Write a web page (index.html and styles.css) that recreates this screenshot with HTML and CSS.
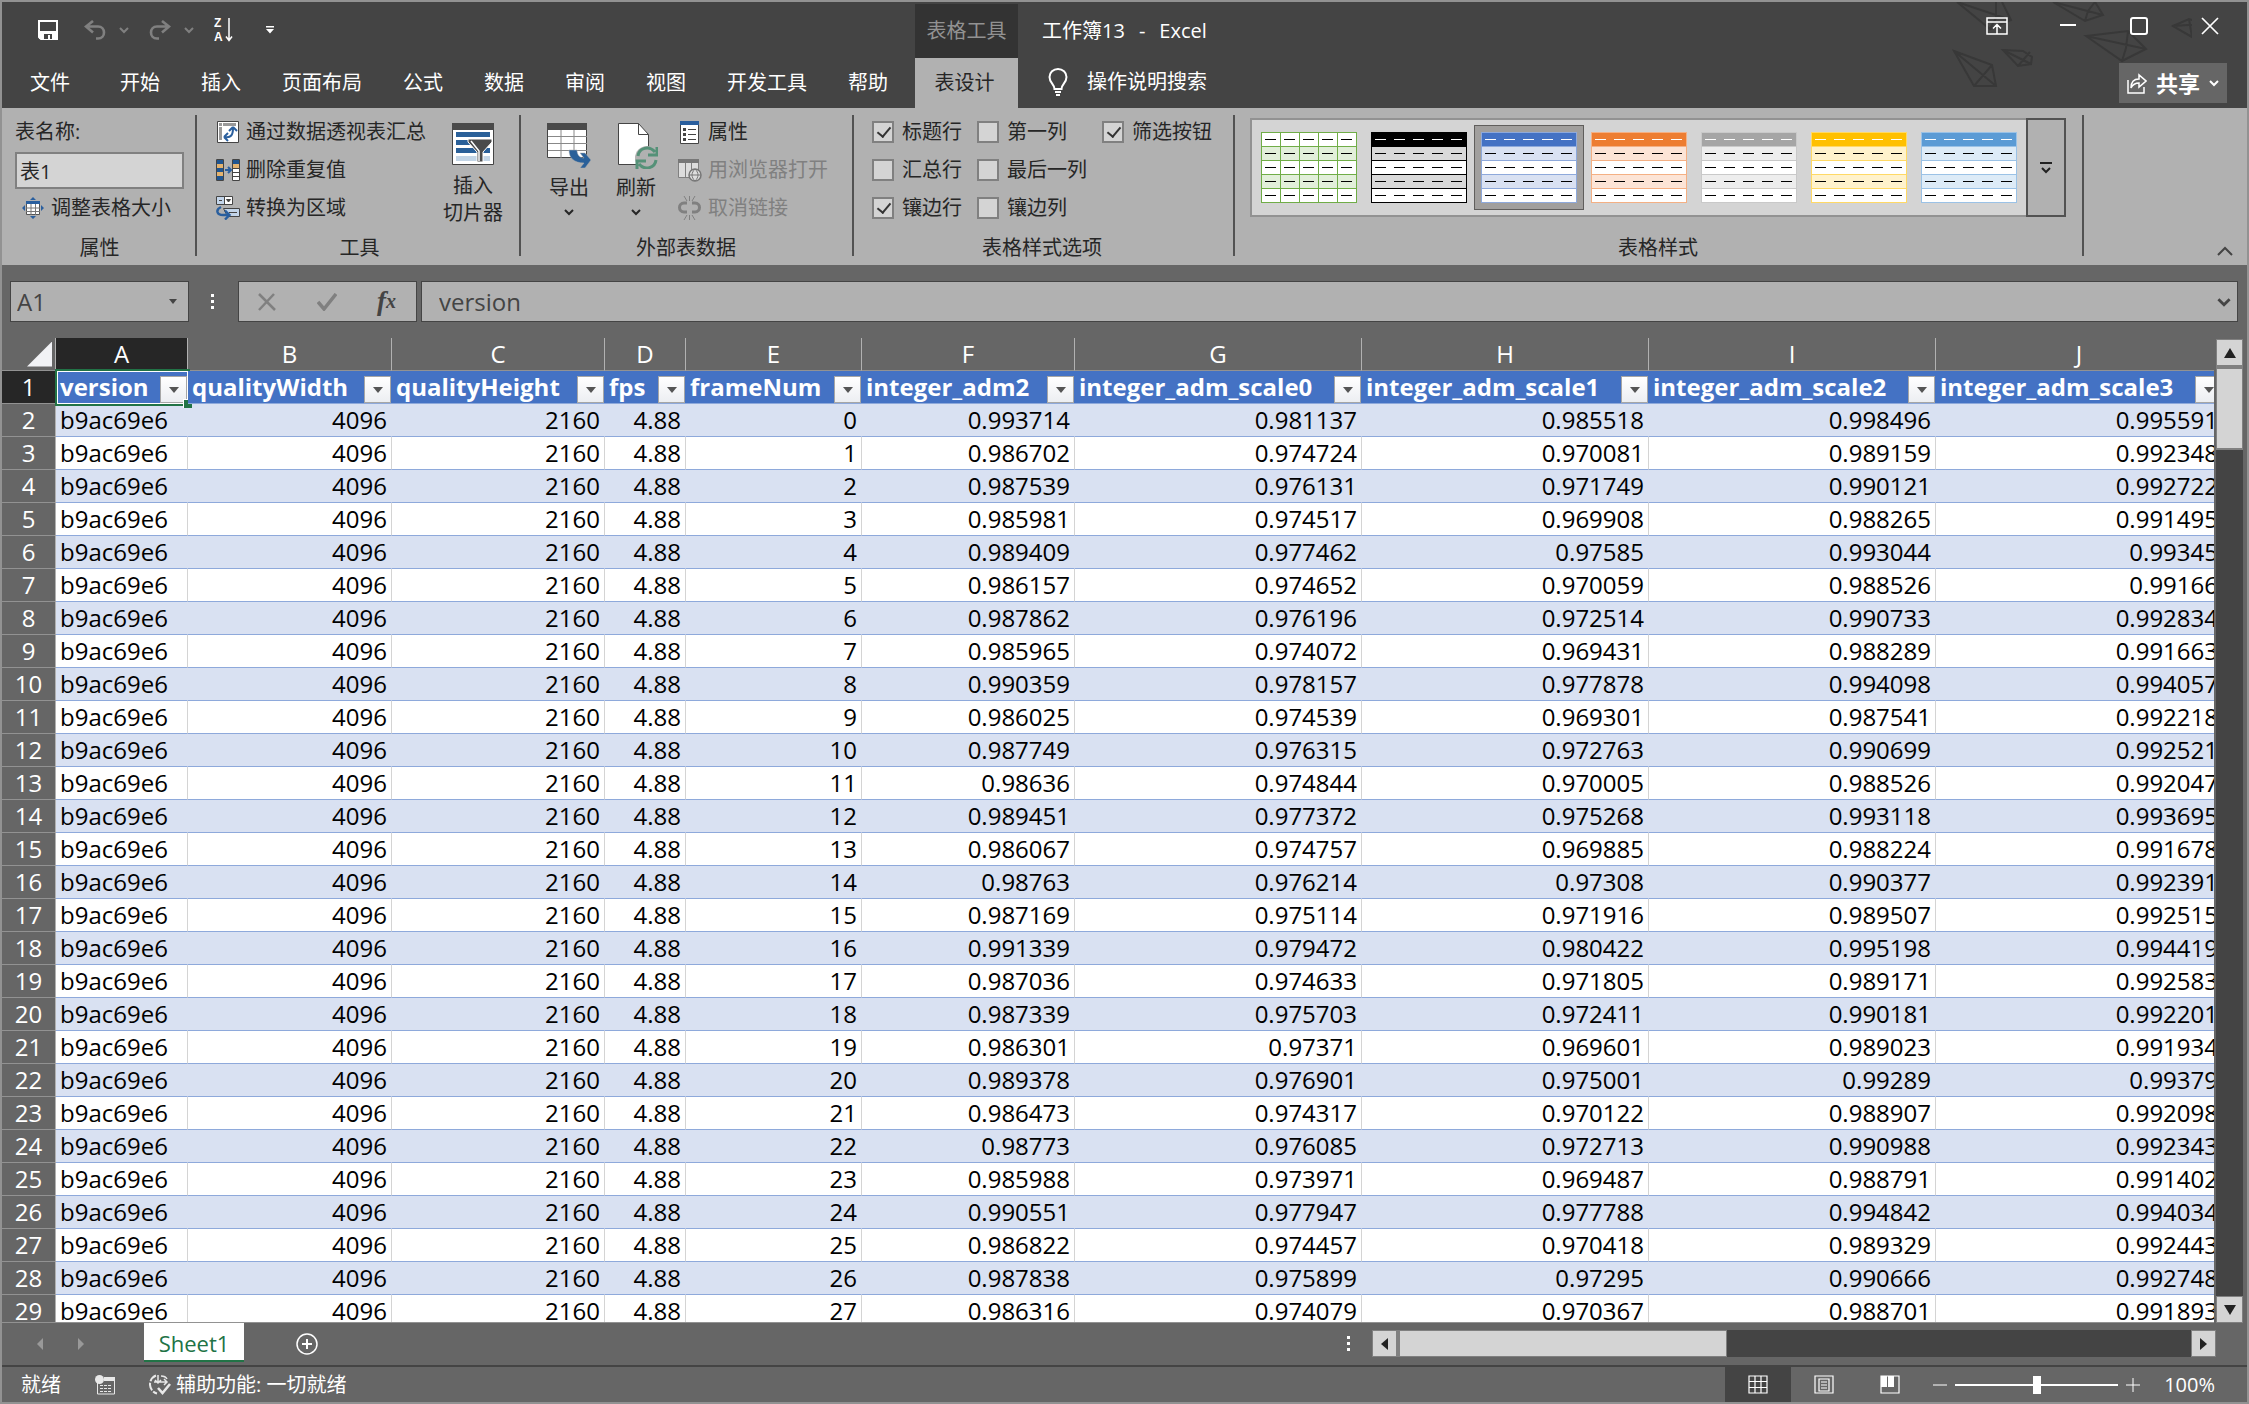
FILE: index.html
```html
<!DOCTYPE html>
<html lang="zh-CN">
  <head>
    <title>工作簿13 - Excel</title>
    <meta charset="utf-8">
    <link rel="stylesheet" href="styles.css">
  </head>
  <body>

  <!-- shared icons -->
  <svg class="defs" width="0" height="0" aria-hidden="true">
    <symbol id="chev" viewBox="0 0 10 10"><path d="M1 3l4 4 4-4" fill="none" stroke="currentColor" stroke-width="2"/></symbol>
    <symbol id="undo" viewBox="0 0 22 20"><path d="M9 1L2 6.500l7 6M3 6.500h11c8 0 8 12 0 12h-2" fill="none" stroke="currentColor" stroke-width="2.600"/></symbol>
    <symbol id="style" viewBox="0 0 96 71">
      <rect width="96" height="71" fill="#fff"/>
      <rect class="s-head" width="96" height="15"/>
      <rect class="s-band" y="14" width="96" height="14"/>
      <rect class="s-band" y="42" width="96" height="14"/>
      <path class="s-line" d="M0 .5h96M0 14.500h96M0 28.500h96M0 42.500h96M0 56.500h96M0 70.500h96M.5 0v71M95.500 0v71"/>
      <path class="s-cols" d="M19.500 0v71M38.500 0v71M57.500 0v71M76.500 0v71"/>
      <path class="s-title" d="M4 7.500h11M23 7.500h11M42 7.500h11M61 7.500h11M80 7.500h11"/>
      <path stroke="#000" d="M4 21.500h11M23 21.500h11M42 21.500h11M61 21.500h11M80 21.500h11M4 35.500h11M23 35.500h11M42 35.500h11M61 35.500h11M80 35.500h11M4 49.500h11M23 49.500h11M42 49.500h11M61 49.500h11M80 49.500h11M4 63.500h11M23 63.500h11M42 63.500h11M61 63.500h11M80 63.500h11"/>
    </symbol>
  </svg>

  <header class="top">
    <svg class="planes" width="240" height="86" viewBox="0 0 240 86" fill="none" stroke="#383838" stroke-width="2">
      <path d="M5 0l33 27 21-9L50 0M5 0l54 18M44 0v16l-6 11M101 0l32 19 18-6-8-13M101 0l50 13M133 19l3-10 7-9M134 34l42-5 18 18-24 12zM134 34l60 13M176 29l-2 17-4 13M221 24l16-7 15 5-12 13zM221 24l31-2M237 17l3 18M2 49l38 14 4 21H22zM2 49l42 35M40 63L22 84M51 48l20 1 9 6-1 7-13 2zM51 48l28 14M78 50L66 64"/>
    </svg>

    <div class="top-main">
      <div class="qat">
        <button class="save" aria-label="保存"><svg width="20" height="20" viewBox="0 0 20 20"><path d="M1 1h18v18H3l-2-2z" fill="none" stroke="#fff" stroke-width="2"/><path d="M1 11h18v8H1z" fill="#fff"/><path d="M6 14h8v5h-2v-4h-2v4H6z" fill="#444"/></svg></button>
        <span class="pair">
          <button aria-label="撤消"><svg width="22" height="20"><use href="#undo"/></svg></button>
          <button aria-label="撤消列表"><svg width="10" height="10"><use href="#chev"/></svg></button>
        </span>
        <span class="pair">
          <button aria-label="恢复"><svg class="flip" width="22" height="20"><use href="#undo"/></svg></button>
          <button aria-label="恢复列表"><svg width="10" height="10"><use href="#chev"/></svg></button>
        </span>
        <button aria-label="降序"><svg width="20" height="30" viewBox="0 0 20 30"><text class="sort" x="0" y="12">Z</text><text class="sort" x="0" y="26">A</text><path d="M15 3v22M12 21.500l3 4 3-4" fill="none" stroke="#fff" stroke-width="1.500"/></svg></button>
        <button class="custom" aria-label="自定义快速访问工具栏"><svg width="8" height="8" viewBox="0 0 8 8"><path d="M0 0h8v1.500H0zM0 3h8L4 7.500z" fill="#fff"/></svg></button>
      </div>
      <nav class="tabs">
        <a class="file" href="#">文件</a>
        <a href="#">开始</a>
        <a href="#">插入</a>
        <a href="#">页面布局</a>
        <a href="#">公式</a>
        <a href="#">数据</a>
        <a href="#">审阅</a>
        <a href="#">视图</a>
        <a href="#">开发工具</a>
        <a href="#">帮助</a>
      </nav>
    </div>

    <div class="context">
      <div class="context-title">表格工具</div>
      <a class="context-tab" href="#">表设计</a>
    </div>

    <div class="top-side">
      <div class="title-row">
        <div class="title"><span>工作簿13</span><span>-</span><span>Excel</span></div>
        <div class="win">
          <button aria-label="功能区显示选项"><svg width="22" height="18" viewBox="0 0 22 18" fill="none" stroke="#fff" stroke-width="1.500"><path d="M1 1h20v16H1zM1 5h20M11 17V8M7 11.500L11 7.500l4 4"/></svg></button>
          <button aria-label="最小化"><svg width="18" height="18" viewBox="0 0 18 18"><path d="M1 8h16" stroke="#fff" stroke-width="2"/></svg></button>
          <button aria-label="最大化"><svg width="18" height="18" viewBox="0 0 18 18"><rect x="1" y="1" width="16" height="16" rx="2" fill="none" stroke="#fff" stroke-width="2"/></svg></button>
          <button aria-label="关闭"><svg width="18" height="18" viewBox="0 0 18 18"><path d="M1 1l16 16M17 1L1 17" stroke="#fff" stroke-width="1.700"/></svg></button>
        </div>
      </div>
      <div class="search-row">
        <button class="tell"><svg width="20" height="28" viewBox="0 0 20 28" fill="none" stroke="#fff" stroke-width="2"><path d="M6.500 21c0-5-5-6-5-12a8.500 8 0 0 1 17 0c0 6-5 7-5 12zM7 24h6M8 27h4"/></svg>操作说明搜索</button>
        <button class="share"><svg width="20" height="21" viewBox="0 0 20 21" fill="none" stroke="#fff" stroke-width="1.500"><path d="M1 7v13h16v-6M4 15c0-6 3-9 8-9V2l7 6-7 6v-4c-4 0-6 1-8 5z"/></svg>共享<svg width="10" height="10"><use href="#chev"/></svg></button>
      </div>
    </div>
  </header>

  <section class="ribbon">
    <div class="group g-props">
      <div class="rows">
        <label for="tname">表名称:</label>
        <input id="tname" type="text" value="表1">
        <button class="cmd resize"><svg width="22" height="22" viewBox="0 0 22 22"><path fill="#fff" stroke="#555" d="M4.500 4.500h13v13h-13z"/><path d="M4 4h14v3H4z" fill="#2a5f9e"/><path stroke="#777" d="M9 7v11M13.500 7v11M4 11h14M4 14.500h14"/><path fill="#2a5f9e" d="M11 0l3 3H8zM11 22l3-3H8zM0 11l3-3v6zM22 11l-3-3v6z"/></svg>调整表格大小</button>
      </div>
      <div class="caption">属性</div>
    </div>

    <div class="group g-tools">
      <div class="cols">
        <div class="rows">
          <button class="cmd"><svg width="24" height="24" viewBox="0 0 24 24"><path d="M1.500 1.500h21v21h-21z" fill="#fff" stroke="#444"/><path d="M3 3h3v3H3zM7 3h13v3H7zM3 7h3v13H3z" fill="#999"/><path d="M9 17c6 1 8-2 8-9M17 7l-4 4M17 7l4 4M8 17l4-4M8 17l4 4" fill="none" stroke="#2a5f9e" stroke-width="2"/></svg>通过数据透视表汇总</button>
          <button class="cmd"><svg width="24" height="24" viewBox="0 0 24 24"><path d="M.5 1.500h7v21h-7zM16.500 1.500h7v21h-7z" fill="#fff" stroke="#444"/><path d="M1 2h6v4H1zM1 10h6v4H1zM1 18h6v4H1zM17 2h6v4h-6z" fill="#1f5591"/><path d="M1 6h6v4H1zM1 14h6v4H1zM17 6h6v4h-6z" fill="#e3b370"/><path d="M17 10.500h6M17 14.500h6M17 18.500h6" stroke="#444"/><path d="M9 12h5M12 9l3 3-3 3" fill="none" stroke="#2a5f9e" stroke-width="2"/></svg>删除重复值</button>
          <button class="cmd"><svg width="24" height="24" viewBox="0 0 24 24"><path d="M.5.500h16v8H.5z" fill="#fff" stroke="#444"/><path d="M1 1h7v7H1z" fill="#c3d5ea"/><path d="M8.500 1v7M3 4.500h3M10.500 3.500h4l-2 2.500z" stroke="#444" fill="#444"/><path d="M7.500 12.500h16v8h-12z" fill="#c3d5ea" stroke="#444"/><path d="M13 16.500h8" stroke="#444"/><path d="M5 11c-6 3-4 8 2 8h5M9 14.500l4.500 4.500L9 23.500" fill="none" stroke="#2a5f9e" stroke-width="2.400"/></svg>转换为区域</button>
        </div>
        <button class="big slicer"><svg width="42" height="42" viewBox="0 0 42 42"><path d="M.5.500h41v41H.5z" fill="#fff" stroke="#444"/><path d="M0 0h42v7H0z" fill="#4a4a4a"/><path d="M4 9h34v5H4zM4 17h34v5H4zM4 25h34v5H4z" fill="#2a6099"/><path d="M4 33h34v5H4z" fill="#c3d5e6"/><path d="M16 16h24v3l-9 10v10h-6V29l-9-10z" fill="#4a4a4a" stroke="#fff"/><path d="M19 18l8 10v10" fill="none" stroke="#fff" stroke-width="1.500"/></svg><span>插入<br>切片器</span></button>
      </div>
      <div class="caption">工具</div>
    </div>

    <div class="group g-ext">
      <div class="cols">
        <button class="big"><svg width="44" height="46" viewBox="0 0 44 46"><path d="M.5.500h39v34H.5z" fill="#fff" stroke="#444"/><path d="M0 0h40v7H0z" fill="#4a4a4a"/><path d="M14 7v28M27 7v28M1 13.500h39M1 20.500h39M1 27.500h39" stroke="#888"/><path d="M22 27h8c0 5 3 8 7 8l-4-5h5l6 7-6 8h-5l4-5c-10 0-15-5-15-13z" fill="#2a6099" stroke="#b1b1b1" stroke-width=".5"/></svg><span>导出</span><svg class="drop" width="10" height="10"><use href="#chev"/></svg></button>
        <button class="big"><svg width="44" height="46" viewBox="0 0 44 46"><path d="M4.500.500h20l10 11v30h-30z" fill="#fff" stroke="#444"/><path d="M24.500.500v11h10" fill="none" stroke="#444"/><circle cx="33" cy="35" r="12" fill="#b1b1b1"/><path d="M24 33c1-8 11-11 17-4M42 37c-1 8-11 11-17 4M43 24v8h-9M23 46v-8h9" fill="none" stroke="#559178" stroke-width="3"/></svg><span>刷新</span><svg class="drop" width="10" height="10"><use href="#chev"/></svg></button>
        <div class="rows">
          <button class="cmd"><svg width="24" height="24" viewBox="0 0 24 24"><path d="M2.500 1.500h18v22h-18z" fill="#fff" stroke="#444"/><path d="M2 1h19v4H2z" fill="#2a5f9e"/><path d="M5 8h3v3H5zM5 13h3v3H5zM5 18h3v3H5z" fill="#444"/><path d="M10 9.500h8M10 14.500h8M10 19.500h8" stroke="#444"/></svg>属性</button>
          <button class="cmd" disabled><svg width="24" height="24" viewBox="0 0 24 24"><path d="M.5 1.500h20v18H.5z" fill="#ddd" stroke="#808080"/><path d="M0 1h21v4H0z" fill="#777"/><path d="M7.500 5v14M13.500 5v14" stroke="#808080"/><circle cx="17" cy="17" r="6" fill="#ddd" stroke="#777" stroke-width="1.500"/><path d="M11 17h12M17 11c-4 4-4 8 0 12M17 11c4 4 4 8 0 12" fill="none" stroke="#777"/></svg>用浏览器打开</button>
          <button class="cmd" disabled><svg width="24" height="24" viewBox="0 0 24 24" fill="none" stroke="#808080"><path d="M9 7H6c-6 0-6 9 0 9h3M14 7h3c6 0 6 9 0 9h-3" stroke-width="3"/><path d="M6 0l3 5M11.500 0v5M17 0l-3 5M6 24l3-5M11.500 24v-5M17 24l-3-5"/></svg>取消链接</button>
        </div>
      </div>
      <div class="caption">外部表数据</div>
    </div>

    <div class="group g-opts">
      <div class="checks">
        <label><input type="checkbox" checked>标题行</label>
        <label><input type="checkbox">第一列</label>
        <label><input type="checkbox" checked>筛选按钮</label>
        <label><input type="checkbox">汇总行</label>
        <label class="wide"><input type="checkbox">最后一列</label>
        <label><input type="checkbox" checked>镶边行</label>
        <label class="wide"><input type="checkbox">镶边列</label>
      </div>
      <div class="caption">表格样式选项</div>
    </div>

    <div class="group g-styles">
      <div class="gallery">
        <div class="swatches">
          <button class="swatch green" aria-label="浅绿"><svg width="96" height="71"><use href="#style"/></svg></button>
          <button class="swatch black" aria-label="黑色"><svg width="96" height="71"><use href="#style"/></svg></button>
          <button class="swatch blue active" aria-label="蓝色"><svg width="96" height="71"><use href="#style"/></svg></button>
          <button class="swatch orange" aria-label="橙色"><svg width="96" height="71"><use href="#style"/></svg></button>
          <button class="swatch gray" aria-label="灰色"><svg width="96" height="71"><use href="#style"/></svg></button>
          <button class="swatch gold" aria-label="金色"><svg width="96" height="71"><use href="#style"/></svg></button>
          <button class="swatch sky" aria-label="天蓝"><svg width="96" height="71"><use href="#style"/></svg></button>
        </div>
        <button class="more" aria-label="其他"><svg width="12" height="12" viewBox="0 0 12 12" fill="none" stroke="#222" stroke-width="2"><path d="M0 1h12M2 6l4 4 4-4"/></svg></button>
      </div>
      <div class="caption">表格样式</div>
    </div>

    <button class="collapse" aria-label="折叠功能区"><svg width="16" height="10" viewBox="0 0 16 10"><path d="M1 9l7-7 7 7" fill="none" stroke="#444" stroke-width="2"/></svg></button>
  </section>

  <section class="formula">
    <div class="namebox">
      <input type="text" value="A1" aria-label="名称框">
      <button aria-label="名称列表"><svg width="8" height="5" viewBox="0 0 8 5"><path d="M0 0h8L4 5z" fill="#444"/></svg></button>
    </div>
    <svg class="dots" width="3" height="16"><path d="M0 0h3v3H0zM0 6h3v3H0zM0 12h3v3H0z" fill="#fff"/></svg>
    <div class="fx">
      <button aria-label="取消"><svg width="20" height="18" viewBox="0 0 20 18"><path d="M2 1l16 16M17 1L2 17" stroke="#808080" stroke-width="2.500"/></svg></button>
      <button aria-label="输入"><svg width="20" height="18" viewBox="0 0 20 18"><path d="M1 9l6 7L19 1" fill="none" stroke="#808080" stroke-width="3.500"/></svg></button>
      <button class="fx-btn" aria-label="插入函数">f<small>x</small></button>
    </div>
    <div class="entry">
      <input type="text" value="version" aria-label="编辑栏">
      <button aria-label="展开编辑栏"><svg width="14" height="14" viewBox="0 0 10 10"><use href="#chev"/></svg></button>
    </div>
  </section>

  <main class="sheet">
    <div class="grid-view">
      <table class="grid">
        <colgroup>
          <col class="w-num"><col class="w-a"><col class="w-b"><col class="w-c"><col class="w-d"><col class="w-e"><col class="w-c"><col class="w-g"><col class="w-g"><col class="w-g"><col class="w-g">
        </colgroup>
        <thead id="head"></thead>
        <tbody id="rows"></tbody>
      </table>
    </div>
    <div class="vscroll">
      <button aria-label="向上滚动"><svg width="12" height="10" viewBox="0 0 12 10"><path d="M6 0l6 10H0z" fill="#222"/></svg></button>
      <div class="vthumb"></div>
      <div class="track"></div>
      <button aria-label="向下滚动"><svg width="12" height="10" viewBox="0 0 12 10"><path d="M0 0h12L6 10z" fill="#222"/></svg></button>
    </div>
  </main>

  <div class="sheetbar">
    <button class="nav" aria-label="上一个工作表"><svg width="6" height="12"><path d="M6 0v12L0 6z" fill="#999"/></svg></button>
    <button class="nav" aria-label="下一个工作表"><svg width="6" height="12"><path d="M0 0v12l6-6z" fill="#999"/></svg></button>
    <a class="sheet-tab" href="#">Sheet1</a>
    <button class="add" aria-label="新工作表"><svg width="22" height="22" viewBox="0 0 22 22" fill="none" stroke="#fff"><circle cx="11" cy="11" r="10" stroke-width="1.500"/><path d="M11 6v10M6 11h10" stroke-width="2"/></svg></button>
    <svg class="dots push" width="3" height="16"><path d="M0 0h3v3H0zM0 6h3v3H0zM0 12h3v3H0z" fill="#fff"/></svg>
    <div class="hscroll">
      <button aria-label="向左滚动"><svg width="7" height="12"><path d="M7 0v12L0 6z" fill="#222"/></svg></button>
      <div class="hthumb"></div>
      <div class="track"></div>
      <button aria-label="向右滚动"><svg width="7" height="12"><path d="M0 0v12l7-6z" fill="#222"/></svg></button>
    </div>
  </div>

  <footer class="status">
    <span>就绪</span>
    <svg class="macro" width="20" height="20" viewBox="0 0 20 20"><path d="M2.500 8v11h17V3H9" fill="none" stroke="#e8e8e8"/><path d="M9 2h11v4H9z" fill="#e8e8e8"/><circle cx="4.500" cy="4.500" r="4.500" fill="#e8e8e8"/><path d="M5 10.500h12M5 13.500h12M5 16.500h12" stroke="#e8e8e8" stroke-dasharray="3 1"/></svg>
    <button class="access"><svg width="22" height="22" viewBox="0 0 22 22" fill="none" stroke="#e8e8e8"><path d="M7 1.500A9.500 9.500 0 0 0 8 19.500" stroke-width="2" stroke-dasharray="8 1.500"/><path d="M9 1v8M5 8h13M15 5l3 3-3 3M6 6l3 3 3-3M12 2c3 0 5 1 6 3" stroke-width="1.500"/><path d="M9 14l4.500 5L21 10" stroke-width="2.600"/></svg>辅助功能: 一切就绪</button>
    <div class="views">
      <button class="on" aria-label="普通"><svg width="20" height="19" viewBox="0 0 20 19" fill="none" stroke="#fff" stroke-width="1.200"><path d="M1 1h18v17H1zM7 1v17M13 1v17M1 6.500h18M1 12.500h18"/></svg></button>
      <button aria-label="页面布局视图"><svg width="20" height="19" viewBox="0 0 20 19" fill="none" stroke="#fff" stroke-width="1.200"><path d="M1 1h18v17H1zM5 4h10v12H5zM7 7h6M7 10h6M7 13h6"/></svg></button>
      <button aria-label="分页预览"><svg width="20" height="19" viewBox="0 0 20 19"><path d="M1 1h18v17H1z" fill="none" stroke="#fff" stroke-width="1.200"/><path d="M1 1h6v11H1zM8 1h6v11H8z" fill="#fff"/></svg></button>
    </div>
    <button class="zoom-btn" aria-label="缩小"><svg width="14" height="14"><path d="M0 7h14" stroke="#fff"/></svg></button>
    <input class="zoom" type="range" min="0" max="100" value="50" aria-label="缩放">
    <button class="zoom-btn" aria-label="放大"><svg width="14" height="14"><path d="M0 7h14M7 0v14" stroke="#fff"/></svg></button>
    <span class="percent">100%</span>
  </footer>

  <script src="script.js"></script>
  </body>
</html>
```
FILE: styles.css
```css
* {
  box-sizing: border-box;
}
html, body {
  height: 100%;
}
body {
  margin: 0;
  border: 2px solid #929292;
  background: #666;
  color: #262626;
  font: 20px/24px "Open Sans", "Noto Sans CJK SC", sans-serif;
  display: flex;
  flex-direction: column;
  overflow: hidden;
}
button, input {
  font: inherit;
  color: inherit;
  background: none;
  border: 0;
  border-radius: 0;
  padding: 0;
  margin: 0;
}
button {
  display: flex;
  align-items: center;
  justify-content: center;
  white-space: nowrap;
}
a {
  color: inherit;
  text-decoration: none;
}
svg {
  display: block;
  flex: none;
}
.defs {
  position: absolute;
}

/* title bar and tabs */
.top {
  position: relative;
  display: flex;
  flex: none;
  height: 106px;
  background: #444;
  color: #fff;
}
.planes {
  position: absolute;
  top: 0;
  right: 55px;
}
.qat {
  display: flex;
  align-items: center;
  gap: 20px;
  height: 56px;
  padding-left: 36px;
}
.save {
  margin-right: 6px;
}
.custom {
  margin-left: 12px;
}
.pair {
  display: flex;
  align-items: center;
  gap: 13px;
  color: #808080;
}
.flip {
  transform: scaleX(-1);
}
.sort {
  fill: #fff;
  font: bold 12px/14px "Liberation Sans", sans-serif;
}
.tabs {
  display: flex;
  gap: 1px;
  padding-right: 7px;
}
.tabs a {
  padding: 13px 20px;
  white-space: nowrap;
}
.tabs .file {
  padding-left: 28px;
  padding-right: 29px;
}
.context {
  width: 103px;
  text-align: center;
}
.context-title {
  margin-top: 2px;
  height: 54px;
  line-height: 54px;
  background: #333;
  color: #929292;
}
.context-tab {
  display: block;
  height: 50px;
  line-height: 50px;
  padding-right: 4px;
  background: #b1b1b1;
  color: #262626;
}
.top-side {
  position: relative;
  flex: 1;
}
.title-row {
  display: flex;
  justify-content: space-between;
  height: 56px;
  padding: 0 2px 0 24px;
}
.title {
  display: flex;
  gap: 14px;
  line-height: 58px;
}
.win {
  display: flex;
}
.win button {
  width: 71px;
  height: 48px;
}
.search-row {
  display: flex;
  justify-content: space-between;
  height: 50px;
  padding: 5px 20px 5px 30px;
}
.tell {
  gap: 19px;
  height: 38px;
}
.share {
  gap: 9px;
  width: 108px;
  height: 40px;
  background: #666;
  font-size: 22px;
  font-weight: bold;
}

/* ribbon */
.ribbon {
  display: flex;
  flex: none;
  padding: 7px 0 9px;
  background: #b1b1b1;
}
.group {
  display: flex;
  flex-direction: column;
  justify-content: space-between;
  height: 141px;
  border-right: 2px solid #525252;
}
.g-props { padding: 0 11px 0 13px; }
.g-tools { padding: 0 16px 0 19px; }
.g-ext { padding: 0 24px 0 23px; }
.g-opts { padding: 0 21px 0 18px; }
.g-styles { padding: 0 16px 0 15px; }
.caption {
  line-height: 16px;
  text-align: center;
}
.rows {
  display: grid;
  grid-template-rows: repeat(3, 34px);
  gap: 4px;
  align-items: center;
}
.cols {
  display: flex;
  gap: 17px;
}
.cmd {
  justify-content: flex-start;
  gap: 6px;
  height: 34px;
}
.cmd:disabled {
  color: #808080;
}
.resize {
  gap: 7px;
  padding-left: 7px;
}
#tname {
  width: 169px;
  height: 37px;
  padding: 0 3px;
  border: 2px solid #808080;
  background: #d4d4d4;
}
.big {
  flex-direction: column;
  justify-content: flex-start;
  width: 50px;
  padding-top: 8px;
}
.big span {
  margin-top: 7px;
}
.slicer {
  width: 60px;
}
.slicer span {
  line-height: 27px;
}
.drop {
  margin-top: 7px;
}
.checks {
  display: grid;
  grid-template-columns: 90px 110px 110px;
  grid-auto-rows: 34px;
  gap: 4px 15px;
}
.checks label {
  display: flex;
  align-items: center;
  gap: 8px;
  white-space: nowrap;
}
.checks .wide {
  grid-column: span 2;
}
.checks input {
  appearance: none;
  width: 22px;
  height: 22px;
  border: 2px solid #808080;
  background: #d4d4d4;
}
.checks input:checked::before {
  content: "";
  display: block;
  width: 6px;
  height: 11px;
  margin: 1px 6px;
  border: solid #333;
  border-width: 0 2px 2px 0;
  transform: rotate(40deg);
}
.gallery {
  display: flex;
  height: 99px;
  margin-top: 3px;
}
.swatches {
  display: flex;
  align-items: center;
  padding: 0 2px;
  border: 2px solid #929292;
  border-right: 0;
  background: #d4d4d4;
}
.swatch {
  width: 110px;
  height: 85px;
}
.swatch.active {
  background: #a19f9d;
  border: 1px solid #605e5c;
}
.more {
  width: 40px;
  border: 2px solid #525252;
}
.s-head { fill: var(--head); }
.s-band { fill: var(--band); }
.s-line { stroke: var(--line); }
.s-cols { stroke: var(--cols, none); }
.s-title { stroke: var(--title, #fff); }
.green { --head: #fff; --band: #e2efda; --line: #70ad47; --cols: #70ad47; --title: #000; }
.black { --head: #000; --band: #d9d9d9; --line: #000; }
.blue { --head: #4472c4; --band: #d9e1f2; --line: #8ea9db; }
.orange { --head: #ed7d31; --band: #fce4d6; --line: #f4b084; }
.gray { --head: #a5a5a5; --band: #ededed; --line: #c9c9c9; }
.gold { --head: #ffc000; --band: #fff2cc; --line: #ffd966; }
.sky { --head: #5b9bd5; --band: #ddebf7; --line: #9bc2e6; }
.collapse {
  align-self: flex-end;
  margin: 0 14px 0 auto;
}

/* formula bar */
.formula {
  display: flex;
  flex: none;
  align-items: center;
  height: 73px;
  padding: 0 9px 0 8px;
  color: #444;
  font-size: 24px;
}
.namebox, .fx, .entry {
  display: flex;
  align-items: center;
  height: 41px;
  border: 1px solid #444;
  background: #b1b1b1;
}
.namebox {
  width: 179px;
  padding: 0 11px 0 6px;
}
.namebox input, .entry input {
  flex: 1;
  min-width: 0;
}
.formula .dots {
  margin: 0 24px 0 22px;
}
.fx {
  width: 179px;
  padding-left: 18px;
  gap: 40px;
}
.fx-btn {
  font: italic bold 27px "Liberation Serif", serif;
}
.fx-btn small {
  font-size: 20px;
}
.entry {
  flex: 1;
  margin-left: 4px;
  padding: 0 6px 0 17px;
}

/* worksheet */
.sheet {
  display: flex;
  flex: 1;
  min-height: 0;
}
.grid-view {
  flex: 1;
  min-width: 0;
  overflow: hidden;
  border-bottom: 1px solid #929292;
}
.grid {
  table-layout: fixed;
  width: 2221px;
  border-spacing: 0;
  background: #fff;
  color: #000;
  font-size: 24px;
  line-height: 30px;
}
.w-num { width: 54px; }
.w-a { width: 132px; }
.w-b { width: 204px; }
.w-c { width: 213px; }
.w-d { width: 81px; }
.w-e { width: 176px; }
.w-g { width: 287px; }
.grid th, .grid td {
  height: 33px;
  padding: 0 4px;
  white-space: nowrap;
}
.grid .letter, .grid .num {
  padding: 0;
  border-right: 1px solid #b1b1b1;
  border-bottom: 1px solid #929292;
  background: #666;
  color: #fff;
  font-weight: normal;
  text-align: center;
}
.grid .sel {
  background: #262626;
}
.corner {
  width: 25px;
  height: 25px;
  margin-left: 25px;
  background: #f1f2f5;
  clip-path: polygon(100% 0, 100% 100%, 0 100%);
}
.grid td {
  border-right: 1px solid #d4d4d4;
  border-bottom: 1px solid #8ea9db;
  text-align: right;
}
.grid td.text {
  text-align: left;
}
.grid tr.band td {
  border-right-color: #d9e1f2;
  background: #d9e1f2;
}
.grid .field {
  position: relative;
  padding: 0 1px 0 4px;
  border-bottom: 1px solid #8ea9db;
  background: #4472c4;
  color: #fff;
  text-align: left;
}
.field-in {
  display: flex;
  justify-content: space-between;
  align-items: center;
  height: 32px;
}
.field-in button {
  flex: none;
  align-self: flex-end;
  width: 27px;
  height: 27px;
  border: 1px solid #a6a6a6;
  background: linear-gradient(#fff, #eceef2);
}
/* active cell frame with its fill handle */
.cursor {
  position: absolute;
  inset: -2px -2px -3px -1px;
  border: 2px solid #217346;
  box-shadow: inset 0 0 0 1px #fff;
  pointer-events: none;
}
.cursor::after {
  content: "";
  position: absolute;
  right: -4px;
  bottom: -4px;
  width: 8px;
  height: 8px;
  border: solid #fff;
  border-width: 1px 0 0 1px;
  background: #217346;
}
.vscroll {
  display: flex;
  flex-direction: column;
  width: 27px;
  margin: 1px 4px 0 2px;
  background: #808080;
}
.vscroll button {
  height: 25px;
  margin: 1px;
  background: #d4d4d4;
}
.vthumb {
  height: 79px;
  margin: 3px 1px 2px;
  background: #d4d4d4;
}
.track {
  flex: 1;
  background: #444;
}

/* sheet tabs */
.sheetbar {
  display: flex;
  flex: none;
  height: 44px;
  padding: 0 31px 0 23px;
  border-bottom: 2px solid #444;
}
.nav {
  width: 30px;
}
.nav + .nav {
  margin-left: 11px;
}
.sheet-tab {
  width: 100px;
  height: 39px;
  margin-left: 48px;
  border-bottom: 2px solid #217346;
  background: #fff;
  color: #217346;
  font-size: 22px;
  line-height: 40px;
  text-align: center;
}
.add {
  margin-left: 52px;
}
.push {
  align-self: center;
  margin: 0 22px 0 auto;
}
.hscroll {
  display: flex;
  width: 844px;
  height: 27px;
  margin-top: 7px;
  background: #808080;
}
.hscroll button {
  width: 23px;
  margin: 1px;
  background: #d4d4d4;
}
.hthumb {
  width: 326px;
  margin: 1px 1px 1px 3px;
  background: #d4d4d4;
}

/* status bar */
.status {
  display: flex;
  flex: none;
  align-items: center;
  height: 35px;
  padding: 0 32px 0 19px;
  color: #fff;
}
.macro {
  margin: 0 34px;
}
.access {
  gap: 5px;
}
.views {
  display: flex;
  align-self: stretch;
  margin-left: auto;
  margin-right: 10px;
}
.views button {
  width: 66px;
}
.views .on {
  background: #444;
}
.zoom {
  appearance: none;
  width: 163px;
  height: 18px;
  margin: 0 8px;
  background: linear-gradient(#fff, #fff) center / 100% 2px no-repeat;
}
.zoom::-webkit-slider-thumb {
  appearance: none;
  width: 8px;
  height: 18px;
  background: #fff;
}
.percent {
  margin-left: 24px;
}
```
FILE: script.js
```js
var fields = ['version', 'qualityWidth', 'qualityHeight', 'fps', 'frameNum', 'integer_adm2',
  'integer_adm_scale0', 'integer_adm_scale1', 'integer_adm_scale2', 'integer_adm_scale3'];

// adm2, scale0, scale1, scale2, scale3 for each frame
var frames = [
  [0.993714, 0.981137, 0.985518, 0.998496, 0.995591],
  [0.986702, 0.974724, 0.970081, 0.989159, 0.992348],
  [0.987539, 0.976131, 0.971749, 0.990121, 0.992722],
  [0.985981, 0.974517, 0.969908, 0.988265, 0.991495],
  [0.989409, 0.977462, 0.97585, 0.993044, 0.99345],
  [0.986157, 0.974652, 0.970059, 0.988526, 0.99166],
  [0.987862, 0.976196, 0.972514, 0.990733, 0.992834],
  [0.985965, 0.974072, 0.969431, 0.988289, 0.991663],
  [0.990359, 0.978157, 0.977878, 0.994098, 0.994057],
  [0.986025, 0.974539, 0.969301, 0.987541, 0.992218],
  [0.987749, 0.976315, 0.972763, 0.990699, 0.992521],
  [0.98636, 0.974844, 0.970005, 0.988526, 0.992047],
  [0.989451, 0.977372, 0.975268, 0.993118, 0.993695],
  [0.986067, 0.974757, 0.969885, 0.988224, 0.991678],
  [0.98763, 0.976214, 0.97308, 0.990377, 0.992391],
  [0.987169, 0.975114, 0.971916, 0.989507, 0.992515],
  [0.991339, 0.979472, 0.980422, 0.995198, 0.994419],
  [0.987036, 0.974633, 0.971805, 0.989171, 0.992583],
  [0.987339, 0.975703, 0.972411, 0.990181, 0.992201],
  [0.986301, 0.97371, 0.969601, 0.989023, 0.991934],
  [0.989378, 0.976901, 0.975001, 0.99289, 0.99379],
  [0.986473, 0.974317, 0.970122, 0.988907, 0.992098],
  [0.98773, 0.976085, 0.972713, 0.990988, 0.992343],
  [0.985988, 0.973971, 0.969487, 0.988791, 0.991402],
  [0.990551, 0.977947, 0.977788, 0.994842, 0.994034],
  [0.986822, 0.974457, 0.970418, 0.989329, 0.992443],
  [0.987838, 0.975899, 0.97295, 0.990666, 0.992748],
  [0.986316, 0.974079, 0.970367, 0.988701, 0.991893]
];

var arrow = '<svg width="10" height="6"><path d="M0 0h10L5 6z" fill="#555"/></svg>';

var letters = '<tr><th class="letter"><div class="corner"></div></th>';
var names = '<tr><th class="num sel">1</th>';
fields.forEach(function(name, i) {
  letters += '<th class="letter' + (i === 0 ? ' sel' : '') + '">' + 'ABCDEFGHIJ'[i] + '</th>';
  names += '<th class="field"><div class="field-in">' + name +
    '<button aria-label="筛选 ' + name + '">' + arrow + '</button></div>' +
    (i === 0 ? '<div class="cursor"></div>' : '') + '</th>';
});
document.getElementById('head').innerHTML = letters + '</tr>' + names + '</tr>';

document.getElementById('rows').innerHTML = frames.map(function(scores, i) {
  var cells = [4096, 2160, 4.88, i].concat(scores);
  return '<tr' + (i % 2 === 0 ? ' class="band"' : '') + '><th class="num">' + (i + 2) + '</th>' +
    '<td class="text">b9ac69e6</td><td>' + cells.join('</td><td>') + '</td></tr>';
}).join('');
```
